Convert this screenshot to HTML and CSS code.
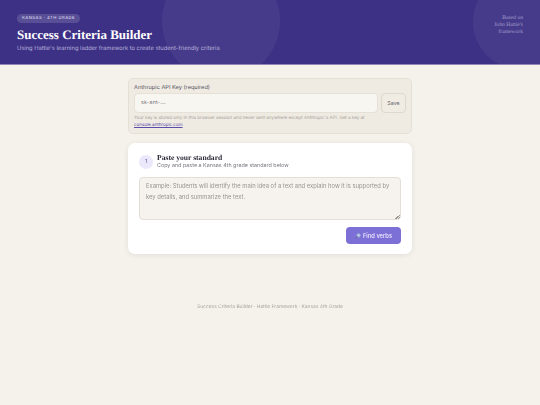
FILE: index.html
```html
<!DOCTYPE html>
<html lang="en">
<head>
<meta charset="utf-8">
<title>Success Criteria Builder</title>
<link rel="stylesheet" href="styles.css">
</head>
<body>
<div class="app">
<header class="hero">
  <span class="circle circle-a"></span>
  <span class="circle circle-b"></span>
  <div class="hero-main">
    <span class="badge">KANSAS · 4TH GRADE</span>
    <h1>Success Criteria Builder</h1>
    <p class="hero-sub">Using Hattie's learning ladder framework to create student-friendly criteria</p>
  </div>
  <p class="hero-note">Based on<br>John Hattie's<br>framework</p>
</header>
<main class="page">
  <section class="key-box">
    <label class="key-label">Anthropic API Key (required)</label>
    <div class="key-row">
      <div class="key-input">sk-ant-...</div>
      <button class="save">Save</button>
    </div>
    <p class="key-note">Your key is stored only in this browser session and never sent anywhere except Anthropic's API. Get a key at <a href="#">console.anthropic.com</a></p>
  </section>
  <section class="card">
    <div class="step-head">
      <span class="step-num">1</span>
      <div>
        <h2>Paste your standard</h2>
        <p class="step-sub">Copy and paste a Kansas 4th grade standard below</p>
      </div>
    </div>
    <textarea class="standard" placeholder="Example: Students will identify the main idea of a text and explain how it is supported by key details, and summarize the text."></textarea>
    <div class="actions">
      <button class="find">
        <svg class="glass" viewBox="0 0 12 12" aria-hidden="true"><circle cx="7.2" cy="4.8" r="3.6" fill="#b9cdf0" stroke="#8fa0c4" stroke-width="1.3"/><path d="M4.6 7.4 1.4 10.6" stroke="#5f6788" stroke-width="1.8" stroke-linecap="round"/></svg>
        <span>Find verbs</span>
      </button>
    </div>
  </section>
</main>
<footer class="foot">Success Criteria Builder · Hattie Framework · Kansas 4th Grade</footer>
</div>
</body>
</html>
```
FILE: styles.css
```css
* { box-sizing: border-box; }
html, body { margin: 0; padding: 0; }
body {
  background: #f5f2eb;
  font-family: "Inter", "Noto Sans", sans-serif;
  color: #3a3744;
  min-height: 405px;
  overflow: hidden;
}
.app {
  filter: blur(0.35px);
  text-rendering: geometricPrecision;
}
.hero {
  position: relative;
  overflow: hidden;
  height: 65px;
  background: #3d3185;
  border-bottom: 1px solid #8f88b8;
  display: flex;
  justify-content: space-between;
  padding: 14px 17px 0;
}
.circle {
  position: absolute;
  border-radius: 50%;
  background: rgba(255, 255, 255, 0.05);
}
.circle-a { left: 162px; top: -38px; width: 118px; height: 118px; }
.circle-b { left: 473px; top: -25px; width: 94px; height: 94px; }
.hero-main { position: relative; display: flex; flex-direction: column; align-items: flex-start; }
.badge {
  font-size: 4.2px;
  line-height: 9px;
  letter-spacing: 0.45px;
  font-weight: 500;
  color: #d4cfe8;
  background: rgba(255, 255, 255, 0.15);
  border-radius: 5px;
  padding: 0 5px;
  height: 9px;
}
h1 {
  margin: 4px 0 0;
  font-family: "Liberation Serif", serif;
  font-size: 13px;
  line-height: 16px;
  font-weight: 700;
  color: #fff;
}
.hero-sub {
  margin: 2px 0 0;
  font-size: 5.75px;
  line-height: 8px;
  color: #b9b2da;
}
.hero-note {
  position: relative;
  margin: 0;
  padding-top: 1px;
  text-align: right;
  font-family: "Liberation Serif", serif;
  font-size: 5.6px;
  line-height: 7.2px;
  color: #a39bca;
}
.page {
  width: 284px;
  margin: 13px auto 0;
  display: flex;
  flex-direction: column;
  gap: 9px;
}
.key-box {
  height: 56px;
  background: #efebe3;
  border: 1px solid #e5e0d6;
  border-radius: 5px;
  padding: 5px 5px 0;
}
.key-label {
  display: block;
  font-size: 5.65px;
  line-height: 8px;
  color: #55515c;
}
.key-row { display: flex; gap: 3px; margin-top: 1px; }
.key-input {
  flex: 1;
  height: 20px;
  background: #f8f6f1;
  border: 1px solid #e6e1d7;
  border-radius: 4px;
  padding: 0 6px;
  font-size: 5.3px;
  line-height: 18px;
  color: #77747c;
  letter-spacing: 0.2px;
}
.save {
  width: 25px;
  height: 20px;
  padding: 0;
  background: #f0ece4;
  border: 1px solid #ddd8cc;
  border-radius: 4px;
  font-family: inherit;
  font-size: 5.3px;
  color: #66626c;
}
.key-note {
  margin: 3px 0 0;
  font-size: 4.5px;
  line-height: 6.8px;
  color: #a9a59d;
}
.key-note a { color: #5a4caa; }
.card {
  height: 111px;
  background: #fff;
  border-radius: 7px;
  box-shadow: 0 1px 5px rgba(60, 50, 100, 0.1);
  padding: 10px 11px 0;
}
.step-head { display: flex; gap: 4px; align-items: center; }
.step-num {
  width: 14px;
  height: 14px;
  border-radius: 50%;
  background: #ebe8fb;
  color: #534a9a;
  font-size: 5.4px;
  line-height: 14px;
  text-align: center;
}
h2 {
  margin: 0;
  font-family: "Liberation Serif", serif;
  font-size: 7.6px;
  line-height: 9px;
  font-weight: 700;
  color: #2a2836;
}
.step-sub {
  margin: 0;
  font-size: 5.4px;
  line-height: 8px;
  color: #77747c;
}
.standard {
  display: block;
  width: 100%;
  height: 43px;
  margin-top: 7px;
  background: #f6f3ee;
  border: 1px solid #e3dfd7;
  border-radius: 4px;
  padding: 2px 6px;
  font-family: inherit;
  font-size: 5.85px;
  line-height: 11px;
  color: #6e6b73;
  outline: none;
}
.standard::placeholder { color: #98958f; opacity: 1; }
.standard::-webkit-resizer {
  background: linear-gradient(135deg, transparent 50%, #9a968e 50%, #9a968e 62%, transparent 62%, transparent 76%, #9a968e 76%, #9a968e 88%, transparent 88%) right bottom / 5px 5px no-repeat;
}
.actions { display: flex; justify-content: flex-end; margin-top: 7px; }
.find {
  display: flex;
  align-items: center;
  justify-content: center;
  gap: 2px;
  width: 55px;
  height: 17px;
  padding: 0;
  background: #7c70d6;
  border: none;
  border-radius: 4px;
  font-family: inherit;
  font-size: 5.8px;
  font-weight: 500;
  color: #efedff;
}
.glass { width: 6px; height: 6px; }
.foot {
  margin-top: 49px;
  text-align: center;
  font-size: 4.9px;
  line-height: 8px;
  color: #aaa69e;
}
```
